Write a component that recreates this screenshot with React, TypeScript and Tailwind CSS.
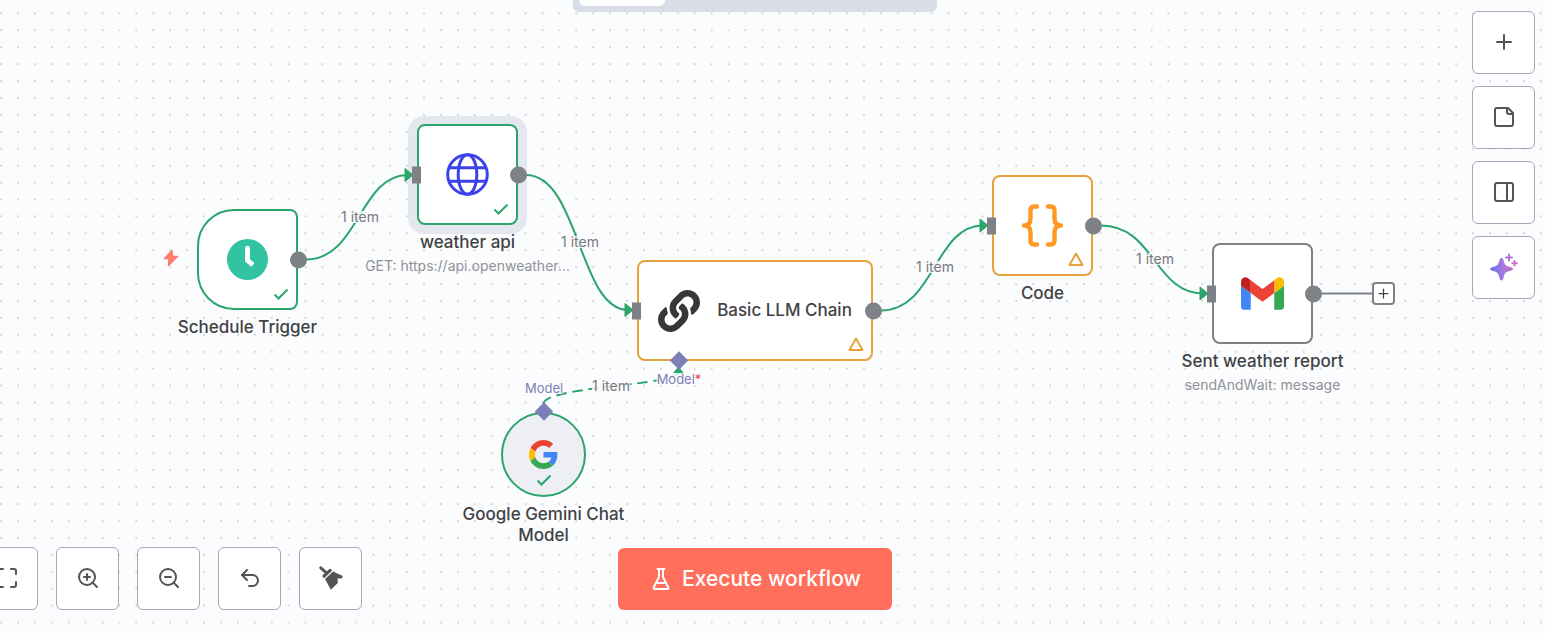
import type { ReactNode } from 'react';
import { Maximize, PanelRight, Plus, Undo2, ZoomIn, ZoomOut } from 'lucide-react';
import { FaLink } from 'react-icons/fa';

function ToolButton({ label, children }: { label: string; children: ReactNode }) {
  return (
    <button
      type="button"
      aria-label={label}
      className="flex size-[63px] shrink-0 items-center justify-center rounded-md border border-[#a3a7b9] bg-white pb-0.5 text-[#525456]"
    >
      {children}
    </button>
  );
}

function DotGrid() {
  return (
    <svg className="absolute inset-0 size-full" aria-hidden="true">
      <defs>
        <pattern id="dots" x="0" y="12.3" width="16.92" height="16.92" patternUnits="userSpaceOnUse">
          <circle cx="1" cy="1" r="0.85" fill="#b2b4ba" />
        </pattern>
      </defs>
      <rect width="100%" height="100%" fill="url(#dots)" />
    </svg>
  );
}

function Edges() {
  return (
    <svg className="absolute inset-0 size-full" fill="none" aria-hidden="true">
      <g stroke="#2ba56b" strokeWidth="2">
        <path d="M306 259.5C359 259.5 359 175 408 175" />
        <path d="M526 175C579 175 579 310 628 310" />
        <path d="M881 310.500C934.500 310.500 934.500 225.500 983 225.500" />
        <path d="M1101 225.500C1154.500 225.500 1154.500 293.500 1203 293.500" />
        <path d="M543.500 404C543.500 386 678.500 386 678.500 372" strokeDasharray="10.6 5.7" />
      </g>
      <path d="M1321 293.500H1373" stroke="#7e8186" strokeWidth="2" />
      <g fill="#2ba56b" stroke="#2ba56b" strokeLinejoin="round">
        <path d="M405 168.500L413 175L405 181.500Z" />
        <path d="M625 303.500L633 310L625 316.500Z" />
        <path d="M980 219L988 225.500L980 232Z" />
        <path d="M1200 287L1208 293.500L1200 300Z" />
        <path d="M678.500 367L684 374H673Z" />
      </g>
    </svg>
  );
}

function EdgeLabel({ place, children }: { place: string; children: ReactNode }) {
  return (
    <span
      className={`absolute -translate-x-1/2 -translate-y-1/2 whitespace-nowrap bg-[#fbfcfe]/85 leading-3 ${place}`}
    >
      {children}
    </span>
  );
}

function InputHandle() {
  return <span className="absolute top-1/2 -left-[7px] h-[17px] w-[9px] -translate-y-1/2 bg-[#7e8186]" />;
}

function OutputHandle() {
  return <span className="absolute top-1/2 -right-[11px] size-[17px] -translate-y-1/2 rounded-full bg-[#7e8186]" />;
}

function Diamond({ place }: { place: string }) {
  return <span className={`absolute size-[13px] -translate-x-1/2 rotate-45 bg-[#7d80b6] ${place}`} />;
}

function Check({ place }: { place: string }) {
  return (
    <svg className={`absolute ${place}`} width="16" height="12" fill="none" aria-hidden="true">
      <path d="M1.500 6.500L5.500 10.500L14.500 1.500" stroke="#2ba56b" strokeWidth="2" />
    </svg>
  );
}

function Warning() {
  return (
    <svg className="absolute right-[7px] bottom-[7px]" width="16" height="15" fill="none" aria-hidden="true">
      <path d="M8 1.500L14.500 13H1.500Z" stroke="#e6a23c" strokeWidth="2" strokeLinejoin="round" />
    </svg>
  );
}

function Caption({ title, detail }: { title: string; detail?: string }) {
  return (
    <div className="absolute top-full left-1/2 mt-[9px] flex w-[220px] -translate-x-1/2 flex-col items-center text-center">
      <h2 className="w-[180px] text-[17px] leading-[21px] font-medium text-[#414244]">{title}</h2>
      {detail && <p className="mt-[3px] text-sm leading-[19px] whitespace-nowrap text-[#909298]">{detail}</p>}
    </div>
  );
}

function Node({ look, children }: { look: string; children: ReactNode }) {
  return (
    <article className={`absolute flex h-[101px] items-center justify-center border-2 bg-white ${look}`}>
      {children}
    </article>
  );
}

function Canvas() {
  return (
    <section aria-label="Workflow canvas" className="absolute inset-0">
      <DotGrid />
      <div className="absolute top-[116px] left-[408px] h-[118px] w-[119px] rounded-2xl bg-[#e5e7ee]" />
      <Edges />

      <svg className="absolute top-[249px] left-[163px]" width="16" height="18" aria-hidden="true">
        <path
          d="M9 1.500L1.500 9.500H6L5.500 16.500L14.500 7.500H9.500Z"
          fill="#ff7c6e"
          stroke="#ff7c6e"
          strokeWidth="1.500"
          strokeLinejoin="round"
        />
      </svg>

      <Node look="top-[209px] left-[197px] w-[101px] rounded-l-[37px] rounded-r-lg border-[#2ba56b]">
        <svg width="41" height="41" viewBox="0 0 42 42" fill="none" aria-hidden="true">
          <circle cx="21" cy="21" r="21" fill="#32c3a2" />
          <path d="M21 10V22L26.500 26.500" stroke="#fff" strokeWidth="5" strokeLinejoin="round" />
          <path d="M21 9.500V10" stroke="#fff" strokeWidth="5" strokeLinecap="round" />
        </svg>
        <Check place="right-[7px] bottom-[8px]" />
        <OutputHandle />
        <Caption title="Schedule Trigger" />
      </Node>

      <Node look="top-[124px] left-[417px] w-[101px] rounded-lg border-[#2ba56b]">
        <svg width="43" height="43" viewBox="0 0 43 43" fill="none" stroke="#3c42ea" strokeWidth="3" aria-hidden="true">
          <circle cx="21.500" cy="21.500" r="19.800" />
          <ellipse cx="21.500" cy="21.500" rx="9.300" ry="19.800" />
          <path d="M3 14.800H40M3 28.200H40" />
        </svg>
        <Check place="right-[7px] bottom-[8px]" />
        <InputHandle />
        <OutputHandle />
        <Caption title="weather api" detail="GET: https://api.openweather…" />
      </Node>

      <Node look="top-[260px] left-[637px] w-[236px] gap-[17px] rounded-lg border-[#e6a23c]">
        <FaLink className="size-[42px] text-[#373737]" aria-hidden="true" />
        <h2 className="text-[17px] leading-[21px] font-medium whitespace-nowrap text-[#414244]">Basic LLM Chain</h2>
        <Warning />
        <InputHandle />
        <OutputHandle />
        <Diamond place="left-[40px] -bottom-[8px]" />
      </Node>

      <Node look="top-[175px] left-[992px] w-[101px] rounded-lg border-[#e6a23c]">
        <svg width="43" height="43" viewBox="0 0 43 43" fill="none" stroke="#ff9922" strokeWidth="4.400" strokeLinecap="round" strokeLinejoin="round" aria-hidden="true">
          <path d="M16 2.500H13.500Q9.500 2.500 9.500 6.500V14.500Q9.500 21.500 3 21.500Q9.500 21.500 9.500 28.500V36.500Q9.500 40.500 13.500 40.500H16" />
          <path d="M27 2.500H29.500Q33.500 2.500 33.500 6.500V14.500Q33.500 21.500 40 21.500Q33.500 21.500 33.500 28.500V36.500Q33.500 40.500 29.500 40.500H27" />
        </svg>
        <Warning />
        <InputHandle />
        <OutputHandle />
        <Caption title="Code" />
      </Node>

      <Node look="top-[243px] left-[1212px] w-[101px] rounded-lg border-[#7e8186]">
        <svg width="43" height="33" viewBox="52 42 88 66" aria-hidden="true">
          <path fill="#4285f4" d="M58 108h14V74L52 59v43c0 3.320 2.690 6 6 6" />
          <path fill="#34a853" d="M120 108h14c3.320 0 6-2.690 6-6V59l-20 15" />
          <path fill="#fbbc04" d="M120 48v26l20-15v-8c0-7.420-8.470-11.650-14.400-7.200" />
          <path fill="#ea4335" d="M72 74V48l24 18 24-18v26L96 92" />
          <path fill="#c5221f" d="M52 51v8l20 15V48l-5.600-4.200c-5.940-4.450-14.400-.220-14.400 7.200" />
        </svg>
        <InputHandle />
        <OutputHandle />
        <Caption title="Sent weather report" detail="sendAndWait: message" />
      </Node>

      <button
        type="button"
        aria-label="Add next node"
        className="absolute top-[282px] left-[1372px] flex size-[23px] items-center justify-center rounded border-2 border-[#7e8186] bg-white text-[#414244]"
      >
        <Plus size={15} strokeWidth={2} />
      </button>

      <article className="absolute top-[412px] left-[501px] flex size-[85px] items-center justify-center rounded-full border-2 border-[#2ba56b] bg-[#eeeff5]">
        <svg width="29" height="29" viewBox="0 0 48 48" aria-hidden="true">
          <path fill="#ea4335" d="M24 9.500c3.540 0 6.710 1.220 9.210 3.600l6.850-6.850C35.900 2.380 30.470 0 24 0 14.620 0 6.510 5.380 2.560 13.220l7.980 6.190C12.430 13.720 17.740 9.500 24 9.500z" />
          <path fill="#4285f4" d="M46.980 24.550c0-1.570-.150-3.090-.380-4.550H24v9.020h12.940c-.580 2.960-2.260 5.480-4.780 7.180l7.730 6c4.510-4.180 7.090-10.360 7.090-17.650z" />
          <path fill="#fbbc05" d="M10.530 28.590c-.480-1.450-.760-2.990-.760-4.590s.270-3.140.760-4.590l-7.980-6.190C.920 16.460 0 20.120 0 24c0 3.880.920 7.540 2.560 10.780l7.970-6.190z" />
          <path fill="#34a853" d="M24 48c6.480 0 11.930-2.130 15.890-5.810l-7.730-6c-2.150 1.450-4.920 2.300-8.160 2.300-6.260 0-11.570-4.220-13.470-9.910l-7.980 6.190C6.510 42.620 14.620 48 24 48z" />
        </svg>
        <Check place="bottom-[9px] left-[33px]" />
        <Diamond place="left-1/2 -top-[9px]" />
        <Caption title="Google Gemini Chat Model" />
      </article>

      <EdgeLabel place="top-[217px] left-[360px] text-sm text-[#77797f]">1 item</EdgeLabel>
      <EdgeLabel place="top-[242px] left-[580px] text-sm text-[#77797f]">1 item</EdgeLabel>
      <EdgeLabel place="top-[267px] left-[935px] text-sm text-[#77797f]">1 item</EdgeLabel>
      <EdgeLabel place="top-[259px] left-[1155px] text-sm text-[#77797f]">1 item</EdgeLabel>
      <EdgeLabel place="top-[386px] left-[611px] text-sm text-[#77797f]">1 item</EdgeLabel>
      <EdgeLabel place="top-[388px] left-[544px] text-[13px] text-[#7d80b6]">Model</EdgeLabel>
      <EdgeLabel place="top-[379px] left-[679px] text-[13px] text-[#7d80b6]">
        Model<span className="text-[#f2394b]">*</span>
      </EdgeLabel>
    </section>
  );
}

export default function App() {
  return (
    <main className="relative flex min-h-screen flex-col overflow-hidden bg-[#fbfcfe] font-['Inter',sans-serif]">
      <Canvas />
      <div className="relative mr-[10px] -ml-[25px] grid flex-1 grid-cols-[1fr_auto_1fr] content-between">
        <div className="col-start-2 h-3 w-[364px] justify-self-center rounded-b-md bg-[#d9dde8] px-1.5">
          <div className="h-1.5 w-[86px] rounded-b-md bg-white" />
        </div>
        <aside className="flex flex-col gap-3 justify-self-end pt-[11px]">
          <ToolButton label="Add node">
            <Plus size={24} />
          </ToolButton>
          <ToolButton label="Add sticky note">
            <svg width="24" height="24" fill="none" stroke="currentColor" strokeWidth="2" strokeLinecap="round" strokeLinejoin="round" aria-hidden="true">
              <path d="M16 3H5a2 2 0 0 0-2 2v14a2 2 0 0 0 2 2h14a2 2 0 0 0 2-2V8Z" />
              <path d="M15 3v4a2 2 0 0 0 2 2h4" />
            </svg>
          </ToolButton>
          <ToolButton label="Toggle panel">
            <PanelRight size={24} />
          </ToolButton>
          <ToolButton label="Ask assistant">
            <svg width="28" height="28" viewBox="0 0 28 28" aria-hidden="true">
              <defs>
                <linearGradient id="spark" x1="0" y1="14" x2="28" y2="14" gradientUnits="userSpaceOnUse">
                  <stop offset="0" stopColor="#6b6cf0" />
                  <stop offset="0.500" stopColor="#a978dc" />
                  <stop offset="1" stopColor="#d4699b" />
                </linearGradient>
              </defs>
              <path
                fill="url(#spark)"
                d="M11.500 5C12.800 5 13.200 6 13.600 7.600C14.600 11.800 15.600 13 19.800 14C21.600 14.500 23 14.800 23 16C23 17.200 21.600 17.600 19.800 18.100C15.600 19.200 14.600 20.300 13.600 24.400C13.200 26 12.800 27.500 11.500 27.500C10.200 27.500 9.800 26 9.400 24.400C8.400 20.300 7.400 19.200 3.200 18.100C1.400 17.600 0.300 17.200 0.300 16C0.300 14.800 1.400 14.500 3.200 14C7.400 13 8.400 11.800 9.400 7.600C9.800 6 10.200 5 11.500 5Z"
              />
              <path d="M19 1.500V7.500M16 4.500H22" stroke="#b673dc" strokeWidth="2" strokeLinecap="round" />
              <path d="M24.500 8V12.500M22.300 10.300H26.800" stroke="#cc72b4" strokeWidth="2" strokeLinecap="round" />
            </svg>
          </ToolButton>
        </aside>

        <div className="col-start-1 row-start-2 mb-[23px] flex gap-[18px]">
          <ToolButton label="Fit view">
            <Maximize size={24} />
          </ToolButton>
          <ToolButton label="Zoom in">
            <ZoomIn size={24} />
          </ToolButton>
          <ToolButton label="Zoom out">
            <ZoomOut size={24} />
          </ToolButton>
          <ToolButton label="Undo">
            <Undo2 size={24} />
          </ToolButton>
          <ToolButton label="Tidy up">
            <svg width="24" height="24" viewBox="0 0 24 24" fill="currentColor" aria-hidden="true">
              <path d="M1.800 1.800L7.500 7" stroke="currentColor" strokeWidth="3" strokeLinecap="round" />
              <path d="M5 10.200L11.200 4.400" stroke="currentColor" strokeWidth="3.200" strokeLinecap="round" />
              <path d="M6 13L14 5.500L22.800 9.500Q24.200 10.500 23.300 11.700Q22.200 13 18.600 12.300L18.800 17L11.800 23.800Z" />
            </svg>
          </ToolButton>
        </div>
        <button
          type="button"
          className="col-start-2 row-start-2 mb-[23px] flex h-[62px] w-[274px] items-center justify-center gap-[9px] self-end justify-self-center rounded-md bg-[#ff6f5c] text-[21px] font-medium whitespace-nowrap text-white"
        >
          <svg width="24" height="24" fill="none" stroke="currentColor" strokeWidth="2" strokeLinecap="round" strokeLinejoin="round" aria-hidden="true">
            <path d="M10 2v7.527a2 2 0 0 1-.211.896L4.720 20.550a1 1 0 0 0 .900 1.450h12.760a1 1 0 0 0 .900-1.450l-5.069-10.127A2 2 0 0 1 14 9.527V2" />
            <path d="M8.500 2h7M7 16h10" />
          </svg>
          Execute workflow
        </button>
      </div>
    </main>
  );
}
